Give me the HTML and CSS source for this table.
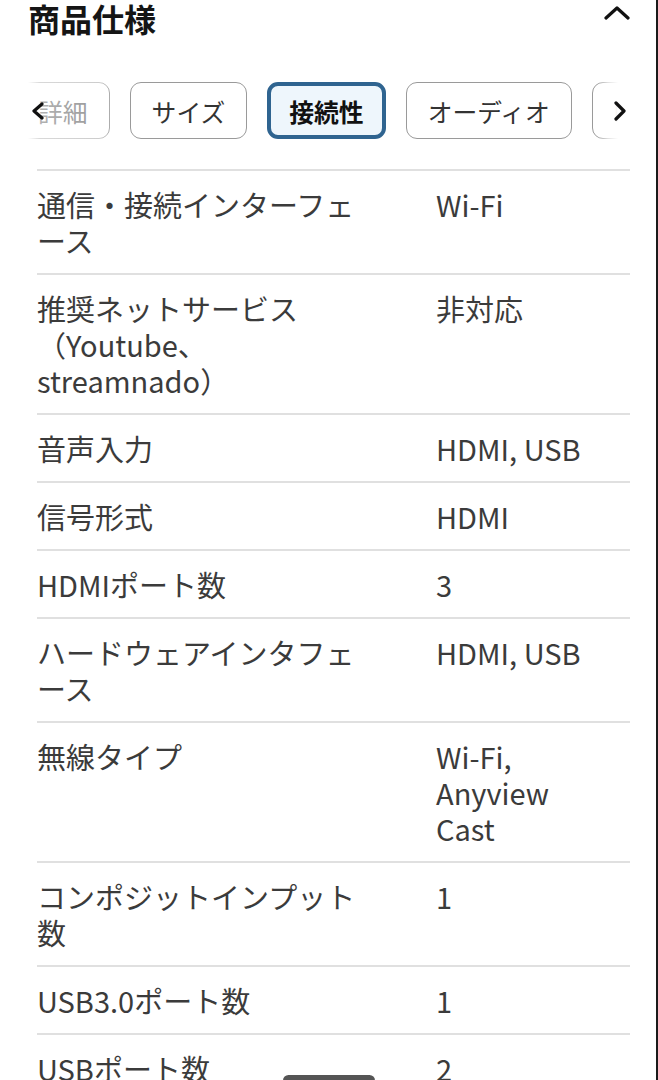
FILE: index.html
```html
<!DOCTYPE html>
<html lang="ja">
<head>
<meta charset="utf-8">
<link rel="stylesheet" href="styles.css">
</head>
<body>
<div class="page">
  <header class="header">
    <h1 class="title">商品仕様</h1>
    <svg class="collapse" width="26" height="14" viewBox="0 0 26 14"><polyline points="2,12 13,2 24,12" fill="none" stroke="#111" stroke-width="3.2" stroke-linecap="round" stroke-linejoin="round"/></svg>
  </header>

  <nav class="tabs">
    <div class="track">
      <span class="chip">詳細</span>
      <span class="chip">サイズ</span>
      <span class="chip chip-active">接続性</span>
      <span class="chip">オーディオ</span>
      <span class="chip">映像</span>
    </div>
    <div class="fade fade-left">
      <svg width="14" height="18" viewBox="0 0 14 18"><polyline points="11,2 3,9 11,16" fill="none" stroke="#111" stroke-width="3.2" stroke-linecap="round" stroke-linejoin="round"/></svg>
    </div>
    <div class="fade fade-right">
      <svg width="14" height="20" viewBox="0 0 14 20"><polyline points="3,2 11,10 3,18" fill="none" stroke="#111" stroke-width="3.2" stroke-linecap="round" stroke-linejoin="round"/></svg>
    </div>
  </nav>

  <div class="specs">
    <div class="row"><div class="label">通信・接続インターフェース</div><div class="value">Wi-Fi</div></div>
    <div class="row"><div class="label">推奨ネットサービス（Youtube、streamnado）</div><div class="value">非対応</div></div>
    <div class="row"><div class="label">音声入力</div><div class="value">HDMI, USB</div></div>
    <div class="row"><div class="label">信号形式</div><div class="value">HDMI</div></div>
    <div class="row"><div class="label">HDMIポート数</div><div class="value">3</div></div>
    <div class="row"><div class="label">ハードウェアインタフェース</div><div class="value">HDMI, USB</div></div>
    <div class="row"><div class="label">無線タイプ</div><div class="value">Wi-Fi, Anyview Cast</div></div>
    <div class="row"><div class="label">コンポジットインプット数</div><div class="value">1</div></div>
    <div class="row"><div class="label">USB3.0ポート数</div><div class="value">1</div></div>
    <div class="row"><div class="label">USBポート数</div><div class="value">2</div></div>
  </div>
</div>
<div class="home-bar"></div>
<div class="edge"></div>
</body>
</html>
```

FILE: styles.css
```css
html, body {
  margin: 0;
  padding: 0;
  background: #fff;
  overflow: hidden;
}
body {
  font-family: "Noto Sans CJK JP", "Noto Sans", sans-serif;
  color: #3a3a3a;
  height: 1080px;
}
.page {
  width: 658px;
}
.header {
  display: flex;
  justify-content: space-between;
  align-items: flex-start;
  padding: 0 28px 0 28px;
  height: 82px;
}
.title {
  margin: 0;
  font-size: 32px;
  line-height: 36px;
  font-weight: 700;
  color: #151515;
}
.collapse {
  margin-top: 6px;
}
.tabs {
  position: relative;
  width: 632px;
  height: 58px;
  overflow: hidden;
}
.track {
  display: flex;
  gap: 20px;
  padding-left: 16px;
  white-space: nowrap;
}
.chip {
  flex: none;
  box-sizing: border-box;
  height: 57px;
  display: flex;
  align-items: center;
  padding: 0 21px;
  border: 1.5px solid #9a9a9a;
  border-radius: 11px;
  font-size: 24.8px;
  color: #333;
  background: #fff;
}
.chip-active {
  border: 4px solid #2f6490;
  background: #eef6fc;
  color: #111;
  font-weight: 700;
  padding: 0 18px;
}
.fade {
  position: absolute;
  top: 0;
  bottom: 0;
  display: flex;
  align-items: center;
}
.fade-left {
  left: 0;
  width: 115px;
  background: linear-gradient(to right, #fff 0, #fff 28px, rgba(255,255,255,0.62) 40px, rgba(255,255,255,0.5) 100px, rgba(255,255,255,0) 115px);
  padding-left: 31px;
  box-sizing: border-box;
}
.fade-right {
  right: 0;
  width: 36px;
  background: linear-gradient(to right, rgba(255,255,255,0) 0, rgba(255,255,255,0.7) 12px, #fff 22px);
  padding-left: 17px;
  box-sizing: border-box;
}
.specs {
  margin: 29px 28px 0 37px;
}
.row {
  display: grid;
  grid-template-columns: 330px 170px;
  column-gap: 69px;
  border-top: 2px solid #e0e0e0;
  padding: 15px 0 15px;
  font-size: 29px;
  line-height: 36px;
}
.label, .value {
  color: #3b3b3b;
}
.home-bar {
  position: fixed;
  left: 283px;
  bottom: -6px;
  width: 92px;
  height: 11px;
  border-radius: 6px;
  background: #555;
}
.edge {
  position: fixed;
  top: 0;
  right: 0;
  bottom: 0;
  width: 2px;
  background: #1a1a1a;
}
```
